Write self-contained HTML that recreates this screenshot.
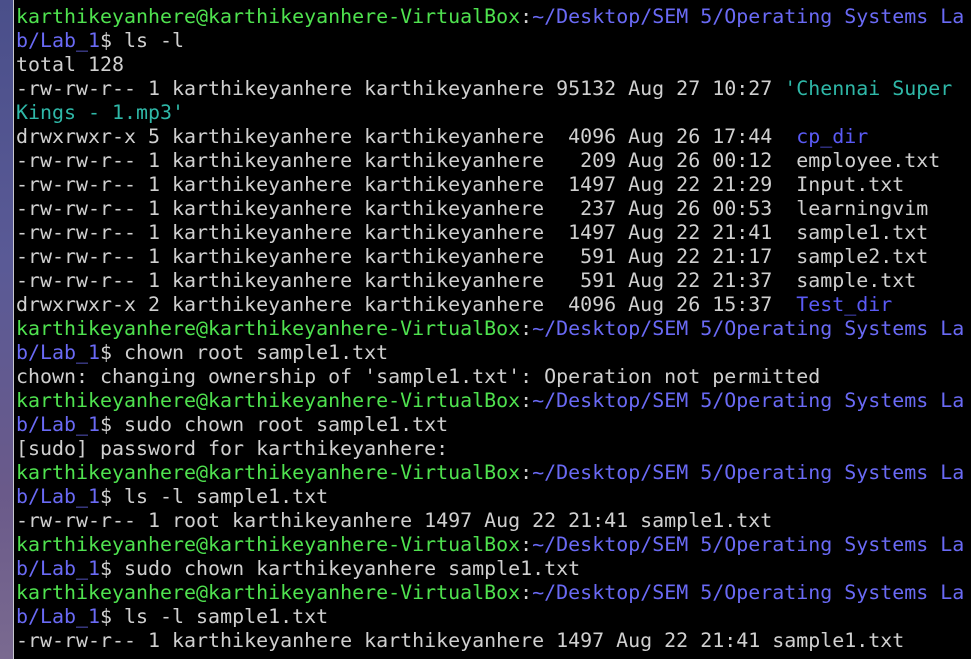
<!DOCTYPE html>
<html><head><meta charset="utf-8"><style>
html,body{margin:0;padding:0;width:971px;height:659px;overflow:hidden;background:#000;}
.strip{position:absolute;left:0;top:0;width:13px;height:659px;background:linear-gradient(180deg,#4a4f8a 0%,#5a5a96 40%,#6a5a8a 75%,#7a6a90 100%);}
.border{position:absolute;left:13px;top:0;width:1px;height:659px;background:#c8c8d0;}
pre{position:absolute;left:16px;top:4px;margin:0;font-family:"DejaVu Sans Mono","Liberation Mono",monospace;font-size:19.95px;line-height:24px;color:#d0d0d0;white-space:pre;}
.g{color:#4fe24f}.b{color:#6a6af5}.c{color:#2fb8a8}.d{color:#5a5af5}
</style></head><body>
<div class="strip"></div><div class="border"></div>
<pre><span class="g">karthikeyanhere@karthikeyanhere-VirtualBox</span>:<span class="b">~/Desktop/SEM 5/Operating Systems La
b/Lab_1</span>$ ls -l
total 128
-rw-rw-r-- 1 karthikeyanhere karthikeyanhere 95132 Aug 27 10:27 <span class="c">'Chennai Super
Kings - 1.mp3'</span>
drwxrwxr-x 5 karthikeyanhere karthikeyanhere  4096 Aug 26 17:44  <span class="d">cp_dir</span>
-rw-rw-r-- 1 karthikeyanhere karthikeyanhere   209 Aug 26 00:12  employee.txt
-rw-rw-r-- 1 karthikeyanhere karthikeyanhere  1497 Aug 22 21:29  Input.txt
-rw-rw-r-- 1 karthikeyanhere karthikeyanhere   237 Aug 26 00:53  learningvim
-rw-rw-r-- 1 karthikeyanhere karthikeyanhere  1497 Aug 22 21:41  sample1.txt
-rw-rw-r-- 1 karthikeyanhere karthikeyanhere   591 Aug 22 21:17  sample2.txt
-rw-rw-r-- 1 karthikeyanhere karthikeyanhere   591 Aug 22 21:37  sample.txt
drwxrwxr-x 2 karthikeyanhere karthikeyanhere  4096 Aug 26 15:37  <span class="d">Test_dir</span>
<span class="g">karthikeyanhere@karthikeyanhere-VirtualBox</span>:<span class="b">~/Desktop/SEM 5/Operating Systems La
b/Lab_1</span>$ chown root sample1.txt
chown: changing ownership of 'sample1.txt': Operation not permitted
<span class="g">karthikeyanhere@karthikeyanhere-VirtualBox</span>:<span class="b">~/Desktop/SEM 5/Operating Systems La
b/Lab_1</span>$ sudo chown root sample1.txt
[sudo] password for karthikeyanhere: 
<span class="g">karthikeyanhere@karthikeyanhere-VirtualBox</span>:<span class="b">~/Desktop/SEM 5/Operating Systems La
b/Lab_1</span>$ ls -l sample1.txt
-rw-rw-r-- 1 root karthikeyanhere 1497 Aug 22 21:41 sample1.txt
<span class="g">karthikeyanhere@karthikeyanhere-VirtualBox</span>:<span class="b">~/Desktop/SEM 5/Operating Systems La
b/Lab_1</span>$ sudo chown karthikeyanhere sample1.txt
<span class="g">karthikeyanhere@karthikeyanhere-VirtualBox</span>:<span class="b">~/Desktop/SEM 5/Operating Systems La
b/Lab_1</span>$ ls -l sample1.txt
-rw-rw-r-- 1 karthikeyanhere karthikeyanhere 1497 Aug 22 21:41 sample1.txt</pre>
</body></html>
